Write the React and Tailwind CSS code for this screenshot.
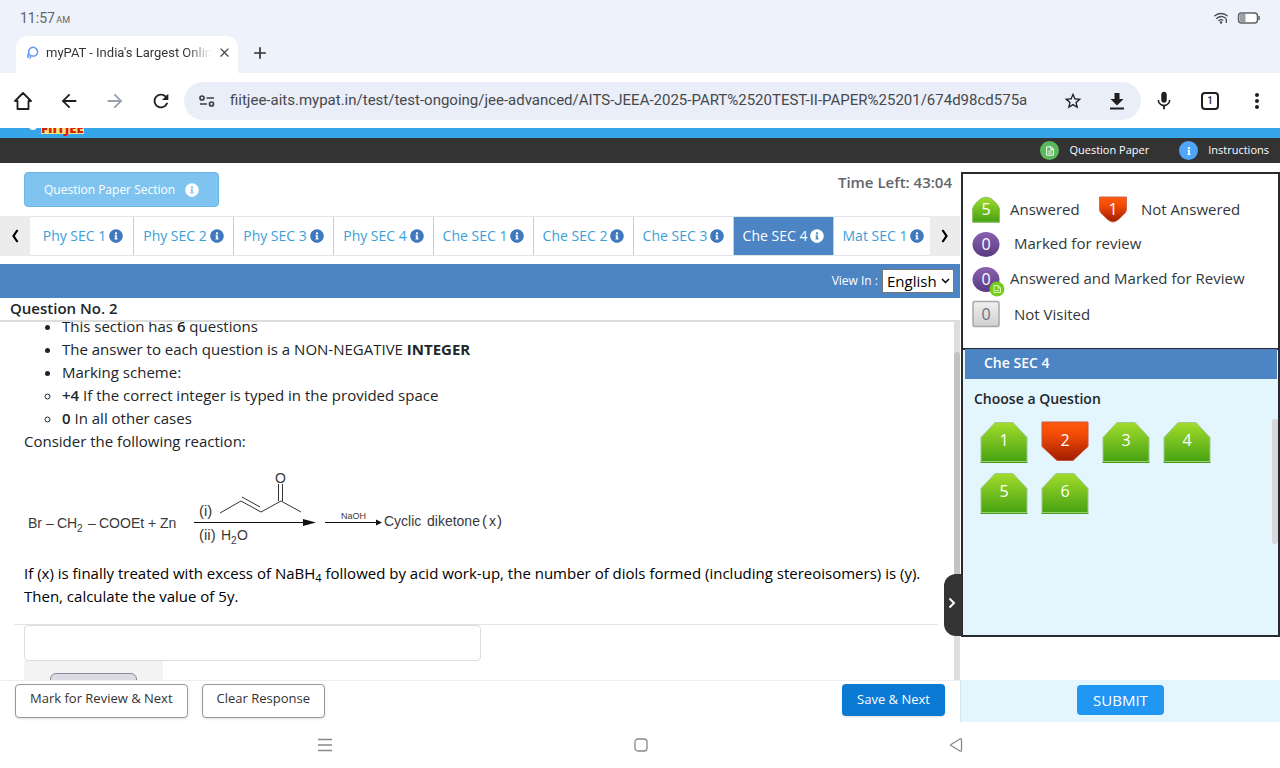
import React from "react";
import { FaInfoCircle, FaInfo } from "react-icons/fa";
import { MdArrowBack, MdArrowForward, MdRefresh, MdStarOutline, MdMic, MdMoreVert, MdClose, MdAdd } from "react-icons/md";

const sections = [
  "Phy SEC 1",
  "Phy SEC 2",
  "Phy SEC 3",
  "Phy SEC 4",
  "Che SEC 1",
  "Che SEC 2",
  "Che SEC 3",
  "Che SEC 4",
  "Mat SEC 1",
];

const activeSection = "Che SEC 4";

const questions = [
  { number: 1, status: "answered" },
  { number: 2, status: "notAnswered" },
  { number: 3, status: "answered" },
  { number: 4, status: "answered" },
  { number: 5, status: "answered" },
  { number: 6, status: "answered" },
];

// Shared gradients for the status shapes
const Gradients = () => (
  <svg width="0" height="0" className="absolute" aria-hidden="true">
    <defs>
      <linearGradient id="green" x1="0" y1="0" x2="0" y2="1">
        <stop offset="0" stopColor="#a2dc2c" />
        <stop offset="1" stopColor="#46a112" />
      </linearGradient>
      <linearGradient id="red" x1="0" y1="0" x2="0" y2="1">
        <stop offset="0" stopColor="#ff5a0c" />
        <stop offset="0.35" stopColor="#f04a06" />
        <stop offset="1" stopColor="#a01c00" />
      </linearGradient>
      <linearGradient id="purple" x1="0" y1="0" x2="0" y2="1">
        <stop offset="0" stopColor="#8a62b0" />
        <stop offset="1" stopColor="#583a82" />
      </linearGradient>
      <linearGradient id="grey" x1="0" y1="0" x2="0" y2="1">
        <stop offset="0" stopColor="#f0f0f0" />
        <stop offset="1" stopColor="#cfcfcf" />
      </linearGradient>
    </defs>
  </svg>
);

const DocIcon = ({ size }) => (
  <svg width={size} height={size} viewBox="0 0 12 12" fill="none" stroke="white" strokeWidth="1.2">
    <path d="M2 1h5.500l2.500 2.500V11H2zM7 1v3h3M4 6h4M4 8.500h4" />
  </svg>
);

const QuestionButton = ({ number, status }) => (
  <button className="grid h-[43px] w-12 place-items-center text-base text-white">
    <svg viewBox="0 0 48 43" className="col-start-1 row-start-1 h-[43px] w-12">
      {status === "answered" ? (
        <>
          <path d="M1 41V16.500L15 1.500h18l14 15V41z" fill="url(#green)" stroke="#9fc98a" />
          <path d="M1.500 40.500h45" stroke="#93d36b" />
          <path d="M.500 41.500h47" stroke="#4a9a20" />
        </>
      ) : (
        <path d="M1 1h46v24.500L32 39.500H16L1 25.500z" fill="url(#red)" stroke="#c8573a" />
      )}
    </svg>
    <span className="z-10 col-start-1 row-start-1 -mt-1.5">{number}</span>
  </button>
);

const LegendBadge = ({ type, count }) => (
  <span
    className={`grid h-7 w-7 shrink-0 place-items-center text-base ${
      type === "notVisited" ? "text-gray-500" : "text-white"
    }`}
  >
    <svg viewBox="0 0 28 28" className="col-start-1 row-start-1 h-7 w-7 overflow-visible">
      {type === "answered" && (
        <>
          <path d="M.500 27V14Q1 11 4 8Q9 2 14 2Q19 2 24 8Q27 11 27.500 14V27z" fill="url(#green)" stroke="#8fc46c" />
          <path d="M.500 27h27" stroke="#56a52a" />
        </>
      )}
      {type === "notAnswered" && (
        <path d="M.500 2h27v13Q27 18 24 20Q18 27 14 27Q10 27 4 20Q1 18 .500 15z" fill="url(#red)" stroke="#d0694c" />
      )}
      {(type === "marked" || type === "answeredMarked") && (
        <ellipse cx="14" cy="14.500" rx="13.500" ry="12.500" fill="url(#purple)" />
      )}
      {type === "answeredMarked" && (
        <>
          <circle cx="25" cy="24" r="7.500" fill="#74cc1c" />
          <path d="M22 20.500h4l2.500 2.500v4.500H22zM26 20.500V23h2.500M23.500 25.500h3.500" fill="none" stroke="#e9ffc9" strokeWidth=".900" />
        </>
      )}
      {type === "notVisited" && (
        <rect x="1" y="1.500" width="26" height="25" rx="2" fill="url(#grey)" stroke="#a8a8a8" strokeWidth="1.500" />
      )}
    </svg>
    <span className="z-10 col-start-1 row-start-1 leading-5">{count}</span>
  </span>
);

const StatusBar = () => (
  <div className="flex h-9 items-center justify-between px-5 text-[#5f6368]">
    <p className="text-sm">
      11:57 <span className="-ml-0.5 text-[9px]">AM</span>
    </p>
    <div className="flex items-center gap-2">
      <svg width="16" height="14" viewBox="0 0 18 14" fill="none" stroke="#4b4f54" strokeWidth="1.500" strokeLinecap="round">
        <path d="M2 4.500Q9-.500 16 4.500M4 7.500Q9 3.500 14 7M6.500 10Q9 8 11 9.500" />
        <circle cx="9" cy="12" r=".700" fill="#4b4f54" />
        <path d="M15 8v4" />
      </svg>
      <svg width="23" height="14" viewBox="0 0 23 14">
        <rect x="1.500" y="2" width="19" height="10" rx="3" fill="white" stroke="#5f6368" strokeWidth="1.500" />
        <path d="M4.500 3h4v8h-4Q2.500 11 2.500 9V5Q2.500 3 4.500 3z" fill="#9aa0a6" />
        <path d="M22 5v4" stroke="#5f6368" strokeWidth="1.500" />
      </svg>
    </div>
  </div>
);

const Browser = () => (
  <header className="shrink-0 bg-[#eef2fa] font-[Roboto,sans-serif]">
    <StatusBar />
    {/* Tab strip */}
    <div className="flex h-[37px] items-center">
      <div className="ml-4 flex h-full w-[222px] items-center rounded-t-xl bg-white pr-1 pb-1 pl-2.5">
        <svg width="14" height="14" viewBox="0 0 14 14" fill="none" stroke="#6b9bf0" strokeWidth="1.600" className="shrink-0">
          <path d="M4.500 9.500A4.500 4.500 0 1 1 7.500 10.300L4.800 9.600 4 12.500M3 6.500Q1.500 9 2.200 12" />
        </svg>
        <p className="ml-1.5 flex-1 overflow-hidden bg-linear-to-r from-[#303134] from-85% to-white bg-clip-text text-[13px] whitespace-nowrap text-transparent">
          myPAT - India's Largest Online
        </p>
        <button aria-label="Close tab" className="ml-1 p-0.5 text-[#45474a]">
          <MdClose size={15} />
        </button>
      </div>
      <button aria-label="New tab" className="ml-3 pb-1 text-[#303134]">
        <MdAdd size={20} />
      </button>
    </div>
    {/* Toolbar */}
    <div className="flex h-[55px] items-center bg-white pr-[11px] pl-3 text-[#1f1f1f]">
      <div className="flex items-center gap-6 pr-3">
        <button aria-label="Home">
          <svg width="22" height="22" viewBox="0 0 22 22" fill="none" stroke="currentColor" strokeWidth="1.800" strokeLinejoin="round">
            <path d="M3 11L11 3l8 8h-2.500v8h-11v-8z" />
          </svg>
        </button>
        <button aria-label="Back"><MdArrowBack size={22} /></button>
        <button aria-label="Forward" className="text-gray-400"><MdArrowForward size={22} /></button>
        <button aria-label="Reload"><MdRefresh size={22} /></button>
      </div>
      <div className="flex h-[38px] min-w-0 flex-1 items-center rounded-full bg-[#e9eef8] pr-3.5 pl-3.5">
        <svg width="18" height="16" viewBox="0 0 18 16" fill="none" stroke="#3c4043" strokeWidth="1.700" className="shrink-0">
          <circle cx="4" cy="5" r="2" />
          <path d="M8.500 5H16M2 11h7" />
          <circle cx="13.500" cy="11" r="2" />
        </svg>
        <p className="ml-3.5 flex-1 overflow-hidden text-[15px] whitespace-nowrap text-[#46494d]">
          fiitjee-aits.mypat.in/test/test-ongoing/jee-advanced/AITS-JEEA-2025-PART%2520TEST-II-PAPER%25201/674d98cd575a
        </p>
        <button aria-label="Bookmark" className="ml-5"><MdStarOutline size={20} /></button>
        <button aria-label="Download" className="ml-6">
          <svg width="20" height="20" viewBox="0 0 20 20" fill="currentColor">
            <path d="M7.500 2h5v6h4L10 14.500 3.500 8h4zM3 16.500h14V18.500H3z" />
          </svg>
        </button>
      </div>
      <div className="flex items-center gap-[26px] pl-3">
        <button aria-label="Voice search"><MdMic size={22} /></button>
        <button aria-label="Tabs" className="flex h-[18px] w-[18px] items-center justify-center rounded border-2 border-current text-[10px] font-medium">
          1
        </button>
        <button aria-label="Menu"><MdMoreVert size={24} /></button>
      </div>
    </div>
  </header>
);

const SectionTabs = () => (
  <nav className="flex h-10 shrink-0 items-stretch">
    <button aria-label="Previous sections" className="flex w-[30px] shrink-0 items-center justify-center bg-[#ececec]">
      <svg width="8" height="14" viewBox="0 0 8 14" fill="none" stroke="black" strokeWidth="2.200">
        <path d="M6.500 1L2.500 7l4 6" />
      </svg>
    </button>
    <div className="flex min-w-0 flex-1 overflow-hidden border-y border-[#e4e4e4] pl-[3px]">
      {sections.map((name, i) => (
        <button
          key={name}
          className={`flex min-w-[100px] flex-1 items-center justify-center gap-[3px] text-sm whitespace-nowrap ${
            i > 0 ? "border-l border-[#ccc]" : ""
          } ${name === activeSection ? "bg-[#4c84c4] text-white" : "text-[#3ba0d8]"}`}
        >
          {name}
          <FaInfoCircle size={14} className={`shrink-0 ${name === activeSection ? "text-white" : "text-[#4078bd]"}`} />
        </button>
      ))}
    </div>
    <button aria-label="Next sections" className="flex w-[30px] shrink-0 items-center justify-center bg-[#ececec]">
      <svg width="8" height="14" viewBox="0 0 8 14" fill="none" stroke="black" strokeWidth="2.200">
        <path d="M1.500 1l4 6-4 6" />
      </svg>
    </button>
  </nav>
);

// Reaction scheme shown between the two halves of the question
const Reaction = () => (
  <svg
    width="490"
    height="84"
    viewBox="24 464 490 84"
    className="mt-[11px] mb-3.5"
    fontFamily="Liberation Sans, Arial, sans-serif"
    fontSize="14"
    fill="#3a3a3a"
  >
    <text x="28" y="528">Br</text>
    <text x="46" y="528">–</text>
    <text x="57" y="528">CH</text>
    <text x="77" y="532" fontSize="10">2</text>
    <text x="88" y="528">–</text>
    <text x="99" y="528">COOEt</text>
    <text x="148" y="528">+</text>
    <text x="160" y="528">Zn</text>
    <text x="199" y="516" fontSize="15">(i)</text>
    <text x="199" y="540" fontSize="15">(ii)</text>
    <text x="221" y="540">H</text>
    <text x="231" y="544" fontSize="10">2</text>
    <text x="237" y="540">O</text>
    <text x="275" y="483">O</text>
    <text x="341" y="519" fontSize="9">NaOH</text>
    <text x="384" y="526">Cyclic</text>
    <text x="427" y="526">diketone</text>
    <text x="482" y="526" fontSize="15">(</text>
    <text x="489" y="526">x</text>
    <text x="497" y="526" fontSize="15">)</text>
    <g fill="none" stroke="#333" strokeWidth="1">
      <path d="M220 513l21-12 20 11 20-11 20 11M242 497l18 10M278.500 501v-17M282.500 501v-17" />
      <path d="M194 522.500h112M325 522.500h53" stroke="#111" strokeWidth="1.200" />
    </g>
    <path d="M303 519l13 3.500-13 3.500zM376 519.500l6 3-6 3z" fill="#111" />
  </svg>
);

const QuestionPanel = () => (
  <section className="relative flex w-3/4 flex-col">
    <div className="flex h-[53px] shrink-0 items-start justify-between pt-[9px] pr-2 pl-6">
      <button className="flex h-[35px] items-center gap-2.5 rounded border border-[#6bb4ea] bg-[#7fc4f1] px-[19px] text-xs text-white">
        Question Paper Section <FaInfoCircle size={14} />
      </button>
      <p className="text-[15px] leading-5 font-semibold text-[#62666b]">Time Left: 43:04</p>
    </div>

    <SectionTabs />

    <div className="mt-2 flex h-[34px] shrink-0 items-center justify-end gap-1 bg-[#4c84c4] pr-1.5">
      <label htmlFor="language" className="text-xs text-white">View In :</label>
      <span className="grid items-center">
        <select
          id="language"
          defaultValue="English"
          className="col-start-1 row-start-1 h-6 w-[72px] appearance-none border border-[#777] bg-white pl-1 text-[15px] leading-5 text-black"
        >
          <option>English</option>
        </select>
        <svg width="9" height="6" viewBox="0 0 9 6" fill="none" stroke="black" strokeWidth="1.500" className="pointer-events-none col-start-1 row-start-1 mr-1 justify-self-end">
          <path d="M1 1l3.500 3.500L8 1" />
        </svg>
      </span>
    </div>

    <h1 className="h-6 shrink-0 border-b-2 border-[#ddd] pl-2.5 text-[15px] leading-5 font-semibold text-[#212529]">
      Question No. 2
    </h1>

    <div className="flex min-h-0 flex-1">
      <div className="min-w-0 flex-1 overflow-hidden text-[15px] leading-[23px] text-[#212529]">
        <div className="-mt-[7px] px-6">
          <ul className="list-disc pl-[38px]">
            <li>This section has <b className="font-semibold">6</b> questions</li>
            <li>The answer to each question is a NON-NEGATIVE <b className="font-bold">INTEGER</b></li>
            <li>Marking scheme:</li>
            <li className="list-[circle]"><b className="font-semibold">+4</b> If the correct integer is typed in the provided space</li>
            <li className="list-[circle]"><b className="font-semibold">0</b> In all other cases</li>
          </ul>
          <p>Consider the following reaction:</p>
          <Reaction />
          <p className="text-black">
            If (x) is finally treated with excess of NaBH<sub className="text-[11px] leading-none">4</sub> followed by acid work-up, the number of diols formed (including stereoisomers) is (y).
            <br />
            Then, calculate the value of 5y.
          </p>
        </div>
        <div className="mt-4 mr-4 ml-3.5 border-t border-[#e4e4e4] pl-2.5">
          <input aria-label="Your answer" className="block h-9 w-1/2 rounded-sm border border-[#ddd] bg-white px-3" />
          <div className="w-[139px] bg-[#f3f3f3] px-[26px] pt-3">
            <button aria-label="Backspace" className="block h-8 w-full rounded-md border border-[#8a8a96] bg-[#dcdae3]" />
          </div>
        </div>
      </div>
      <div className="w-1.5 bg-[#dedede] pt-[30px]">
        <div className="h-3/4 rounded-full bg-[#c3c3c3]" />
      </div>
    </div>

    <div className="flex h-[42px] shrink-0 items-start justify-between border-t border-[#eee] pt-[3px] pr-[15px] pl-[15px] text-[13px]">
      <div className="flex gap-3.5">
        <button className="h-[34px] rounded border border-[#999] bg-white px-3.5 pb-1 text-[#333] shadow-sm">Mark for Review &amp; Next</button>
        <button className="h-[34px] rounded border border-[#999] bg-white px-3.5 pb-1 text-[#333] shadow-sm">Clear Response</button>
      </div>
      <button className="h-8 rounded-sm bg-[#0b7ad5] px-[15px] text-white shadow-sm">Save &amp; Next</button>
    </div>

    {/* Handle that folds the palette away */}
    <button
      aria-label="Collapse palette"
      className="absolute -right-0.5 bottom-[86px] flex h-[62px] w-[18px] items-center justify-center rounded-l-xl bg-[#333] pr-0.5 pb-1"
    >
      <svg width="8" height="12" viewBox="0 0 8 12" fill="none" stroke="white" strokeWidth="2">
        <path d="M1.500 1.500L6 6l-4.500 4.500" />
      </svg>
    </button>
  </section>
);

const Palette = () => (
  <aside className="flex w-1/4 flex-col">
    <div className="mt-[9px] ml-px flex min-h-0 flex-1 flex-col border-2 border-[#272b2f]">
      <div className="shrink-0 border-b-2 border-[#272b2f] pt-[18px] pr-2 pb-4 pl-[9px] text-[15px] text-[#33373b]">
        <div className="flex h-[34px] items-center">
          <LegendBadge type="answered" count={5} />
          <span className="ml-2.5 w-[89px]">Answered</span>
          <LegendBadge type="notAnswered" count={1} />
          <span className="ml-3.5">Not Answered</span>
        </div>
        <div className="flex h-[35px] items-center">
          <LegendBadge type="marked" count={0} />
          <span className="ml-3.5">Marked for review</span>
        </div>
        <div className="flex h-[35px] items-center">
          <LegendBadge type="answeredMarked" count={0} />
          <span className="ml-2.5 whitespace-nowrap">Answered and Marked for Review</span>
        </div>
        <div className="flex h-9 items-center">
          <LegendBadge type="notVisited" count={0} />
          <span className="ml-3.5">Not Visited</span>
        </div>
      </div>
      <div className="flex min-h-0 flex-1 flex-col bg-[#e3f5fd]">
        <h2 className="-mt-px mr-px ml-0.5 h-[30px] bg-[#4c84c4] pl-[19px] text-sm leading-7 font-semibold text-white">Che SEC 4</h2>
        <h3 className="py-2.5 pl-[11px] text-sm font-semibold text-[#212529]">Choose a Question</h3>
        <div className="flex flex-1 items-start">
          <div className="flex flex-1 flex-wrap gap-x-[13px] gap-y-2 pt-0.5 pr-10 pl-[17px]">
            {questions.map((q) => (
              <QuestionButton key={q.number} number={q.number} status={q.status} />
            ))}
          </div>
          <div className="h-[125px] w-1.5 rounded-full bg-[#d6d8da]" />
        </div>
      </div>
    </div>
    <div className="mt-[43px] flex h-[42px] shrink-0 items-center justify-center border-l border-[#d3e5ee] bg-[#e3f5fd] pb-0.5">
      <button className="h-[30px] rounded-sm bg-[#2196f3] px-4 text-[15px] text-white">SUBMIT</button>
    </div>
  </aside>
);

const App = () => {
  return (
    <div className="flex h-screen flex-col overflow-hidden bg-white font-['Open_Sans','Noto_Sans',sans-serif]">
      <Gradients />
      <Browser />

      {/* Site header, scrolled so only the foot of the logo shows */}
      <div className="flex h-2.5 shrink-0 items-end overflow-hidden bg-[#36a6e8] pb-1 pl-[29px]">
        <span className="mb-1 h-2 w-2 rounded-full bg-white" />
        <span className="ml-1 bg-[#f7e27a] text-[13px] leading-3 font-black text-[#d81e10]">FIITJEE</span>
      </div>
      <div className="flex h-[25px] shrink-0 items-center justify-end gap-[30px] bg-[#333] pr-[11px] text-[11px] text-white">
        <a href="#paper" className="flex items-center gap-2.5">
          <span className="flex h-[19px] w-[19px] items-center justify-center rounded-full bg-[#5cb85c]">
            <DocIcon size={10} />
          </span>
          Question Paper
        </a>
        <a href="#instructions" className="flex items-center gap-2.5">
          <span className="flex h-[19px] w-[19px] items-center justify-center rounded-full bg-[#4fa6f7]">
            <FaInfo size={8} />
          </span>
          Instructions
        </a>
      </div>

      <main className="flex min-h-0 flex-1">
        <QuestionPanel />
        <Palette />
      </main>

      {/* Android navigation */}
      <footer className="flex h-[46px] shrink-0 items-center justify-center gap-[23.5%] text-[#888]">
        <button aria-label="Recent apps">
          <svg width="16" height="14" viewBox="0 0 16 14" stroke="currentColor" strokeWidth="1.300">
            <path d="M1 1.500h14M1 7h14M1 12.500h14" />
          </svg>
        </button>
        <button aria-label="Home screen">
          <svg width="14" height="14" viewBox="0 0 14 14" fill="none" stroke="currentColor" strokeWidth="1.300">
            <rect x="1" y="1" width="12" height="12" rx="3" />
          </svg>
        </button>
        <button aria-label="Go back">
          <svg width="14" height="16" viewBox="0 0 14 16" fill="none" stroke="currentColor" strokeWidth="1.300">
            <path d="M12.500 2.500v11q0 1-1.500.500L2 8.500Q1 8 2 7.500L11 2q1.500-.500 1.500.500z" />
          </svg>
        </button>
      </footer>
    </div>
  );
};

export default App;
